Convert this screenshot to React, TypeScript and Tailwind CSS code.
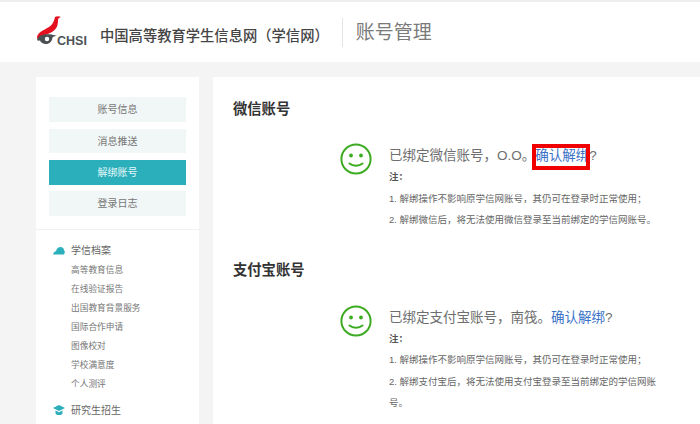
const FONT = "font-['Liberation_Sans','Noto_Sans_CJK_SC',sans-serif]";

function Smile() {
  return (
    <svg width="32" height="32" viewBox="0 0 32 32" fill="none" className="shrink-0">
      <circle cx="16" cy="16" r="14.6" stroke="#3dab22" strokeWidth="2" />
      <circle cx="11" cy="12.5" r="1.9" fill="#3dab22" />
      <circle cx="21" cy="12.5" r="1.9" fill="#3dab22" />
      <path d="M9.5 20.5c3.5 3 9.5 3 13 0" stroke="#3dab22" strokeWidth="2" strokeLinecap="round" />
    </svg>
  );
}

function Logo() {
  return (
    <div className="flex items-end w-[54px] h-[34px] relative">
      <svg width="30" height="34" viewBox="0 0 30 34" className="shrink-0">
        <path d="M20 2c2-1 4-1 6 0-2 .5-3 1.500-3 3 0 5-1 9-6 12-4 2.500-9 3-12 8-2 0-3-1-3-3 1-5 7-7 12-10 4-2.500 5-6 6-10z" fill="#e3101f" />
        <path d="M2 25c1-3 3-5 7-5.500 5-.5 9 0 13 1.500-2 0-3.500.5-4.500 1.500-.5 4-3 6.500-6.500 6.500-3 0-5-1.500-6-3.500-1 0-2 .5-3-.5z" fill="#4a4f52" />
        <circle cx="12" cy="24" r="2.200" fill="#fff" />
      </svg>
      <span className="absolute left-[22px] top-[19px] text-[12.500px] leading-[14px] font-bold text-[#4d5356]">CHSI</span>
    </div>
  );
}

function NavButton({ label, active, className = "" }: { label: string; active?: boolean; className?: string }) {
  return (
    <div
      className={`flex items-center justify-center text-[10px] ${className} ${
        active ? "bg-[#2bafbb] text-[#e6f7f8]" : "bg-[#f1f6f6] text-[#777]"
      }`}
    >
      {label}
    </div>
  );
}

function Section({
  title,
  message,
  boxed,
  line2,
  rowClass,
}: {
  title: string;
  message: string;
  boxed?: boolean;
  line2: string;
  rowClass: string;
}) {
  return (
    <section>
      <h2 className="text-[14.300px] leading-[20px] font-bold text-[#333]">{title}</h2>
      <div className={`flex pl-[107px] ${rowClass}`}>
        <div className="mt-[-3px]">
          <Smile />
        </div>
        <div className="ml-[17px] w-[268px]">
          <div className="text-[13.500px] leading-[20px] text-[#6e6e6e] whitespace-nowrap">
            {message}
            <span className="relative text-[#3b73c8]">
              确认解绑
              {boxed && <span className="absolute left-[-3px] right-[-1px] top-[-4px] bottom-[-7px] border-[4px] border-[#f00000]" />}
            </span>
            ?
          </div>
          <div className="text-[9.500px] leading-[21.500px] text-[#666]">
            <div className="font-bold text-[#555]">注：</div>
            <div className="whitespace-nowrap">1. 解绑操作不影响原学信网账号，其仍可在登录时正常使用；</div>
            <div>{line2}</div>
          </div>
        </div>
      </div>
    </section>
  );
}

export default function App() {
  return (
    <div className={`w-[700px] h-[424px] overflow-hidden bg-[#f4f4f4] ${FONT}`}>
      <header className="h-[62px] bg-white border-t-2 border-[#eeeeee] flex items-center pl-[35px]">
        <div className="mt-[-1px]">
          <Logo />
        </div>
        <div className="ml-[11px] mt-[10px] text-[14.300px] font-medium text-[#444] whitespace-nowrap">
          中国高等教育学生信息网（学信网）
        </div>
        <div className="ml-[13px] mt-[1px] w-px h-[29px] bg-[#e4e4e4]" />
        <div className="ml-[13px] mt-[3px] text-[19px] text-[#7a7a7a] whitespace-nowrap">账号管理</div>
      </header>

      <div className="flex pl-[36px] pt-[15px] gap-[14px]">
        <aside className="w-[163px] h-[400px] bg-white shrink-0">
          <div className="pt-[20px] px-[13px] pb-[13px] flex flex-col border-b border-[#f1f1f1]">
            <NavButton label="账号信息" className="h-[25px]" />
            <NavButton label="消息推送" className="h-[24px] mt-[7px]" />
            <NavButton label="解绑账号" active className="h-[25px] mt-[7px]" />
            <NavButton label="登录日志" className="h-[25px] mt-[6px]" />
          </div>
          <div className="pl-[17px] pt-[12px]">
            <div className="flex items-center h-[16px] text-[10px] text-[#666]">
              <svg width="12" height="9" viewBox="0 0 12 9" className="shrink-0">
                <path d="M0 8.500c.5-2 1.500-3 3-3.200C3.500 2.500 5.500 1 7.500 1c2 0 3.200 1.300 3.500 3 1 1 1 3 0 4.500z" fill="#2bafbb" />
              </svg>
              <span className="ml-[6px]">学信档案</span>
            </div>
            <ul className="pl-[18px] mt-[3px] text-[8.700px] leading-[19px] text-[#777]">
              <li>高等教育信息</li>
              <li>在线验证报告</li>
              <li>出国教育背景服务</li>
              <li>国际合作申请</li>
              <li>图像校对</li>
              <li>学校满意度</li>
              <li>个人测评</li>
            </ul>
            <div className="flex items-center h-[16px] mt-[8px] text-[10px] text-[#666]">
              <svg width="12" height="11" viewBox="0 0 12 11" className="shrink-0">
                <path d="M6 0 12 3 6 6 0 3z" fill="#2bafbb" />
                <path d="M2.500 5.500 6 7.300l3.500-1.800V8.500C8.500 10.500 3.500 10.500 2.500 8.500z" fill="#2bafbb" />
              </svg>
              <span className="ml-[6px]">研究生招生</span>
            </div>
          </div>
        </aside>

        <main className="flex-1 h-[400px] bg-white pl-[20px] pt-[22px]">
          <Section
            title="微信账号"
            rowClass="mt-[27px]"
            message="已绑定微信账号，O.O。"
            boxed
            line2="2. 解绑微信后，将无法使用微信登录至当前绑定的学信网账号。"
          />
          <div className="mt-[29px]">
            <Section
              title="支付宝账号"
              rowClass="mt-[28px]"
              message="已绑定支付宝账号，南筏。"
              line2="2. 解绑支付宝后，将无法使用支付宝登录至当前绑定的学信网账号。"
            />
          </div>
        </main>
      </div>
    </div>
  );
}
